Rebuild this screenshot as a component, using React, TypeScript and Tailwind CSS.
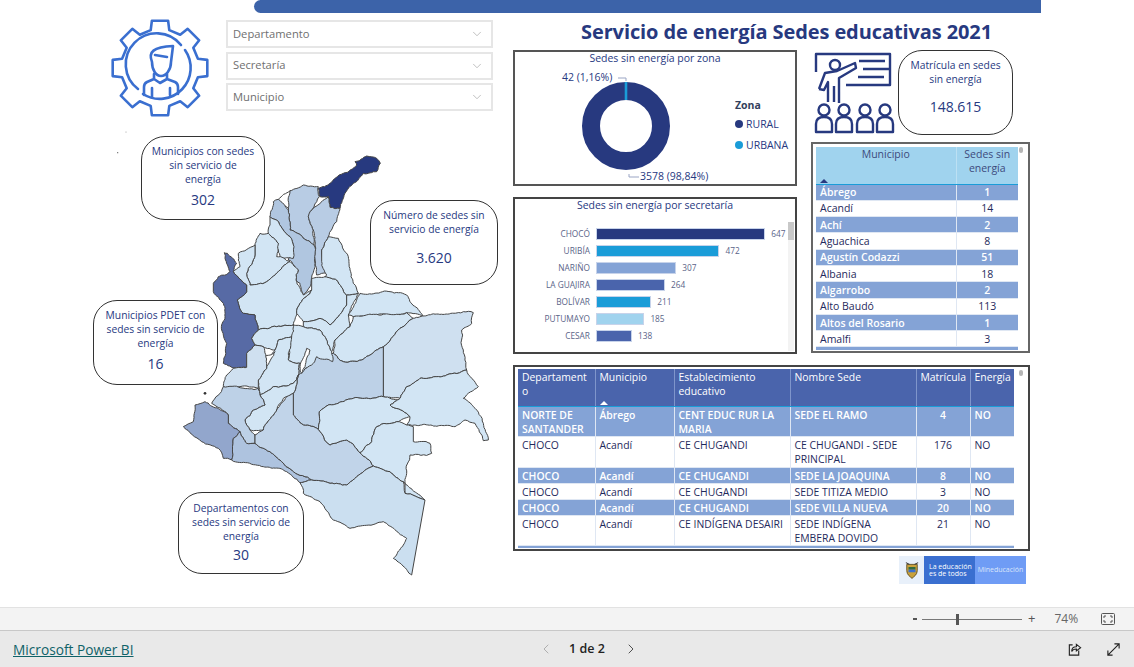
import { ChevronDown, ChevronLeft, ChevronRight } from "lucide-react";

const navy = "#27397f";
const cyan = "#1a9cd8";
const periwinkle = "#84a3d6";
const indigo = "#4a64ac";
const sky = "#a0d3ee";

const secretarias = [
  { name: "CHOCÓ", value: 647, color: navy },
  { name: "URIBÍA", value: 472, color: cyan },
  { name: "NARIÑO", value: 307, color: periwinkle },
  { name: "LA GUAJIRA", value: 264, color: indigo },
  { name: "BOLÍVAR", value: 211, color: cyan },
  { name: "PUTUMAYO", value: 185, color: sky },
  { name: "CESAR", value: 138, color: indigo },
];

const municipios: [string, number][] = [
  ["Ábrego", 1],
  ["Acandí", 14],
  ["Achí", 2],
  ["Aguachica", 8],
  ["Agustín Codazzi", 51],
  ["Albania", 18],
  ["Algarrobo", 2],
  ["Alto Baudó", 113],
  ["Altos del Rosario", 1],
  ["Amalfi", 3],
];

const sedes = [
  ["NORTE DE SANTANDER", "Ábrego", "CENT EDUC RUR LA MARIA", "SEDE EL RAMO", "4"],
  ["CHOCO", "Acandí", "CE CHUGANDI", "CE CHUGANDI - SEDE PRINCIPAL", "176"],
  ["CHOCO", "Acandí", "CE CHUGANDI", "SEDE LA JOAQUINA", "8"],
  ["CHOCO", "Acandí", "CE CHUGANDI", "SEDE TITIZA MEDIO", "3"],
  ["CHOCO", "Acandí", "CE CHUGANDI", "SEDE VILLA NUEVA", "20"],
  ["CHOCO", "Acandí", "CE INDÍGENA DESAIRI", "SEDE INDÍGENA EMBERA DOVIDO", "21"],
];

// departamentos, traced by hand from the reference
const departamentos = [
  { fill: "#ffffff", d: "M565 208L600 182L605 240Z" },
  { fill: navy, d: "M685 175L720 160L760 130L800 105L795 95L830 78L860 85L871 100L860 125L820 130L790 160L765 190L750 235L720 232L715 200L690 200Z" },
  { fill: "#b8cce4", d: "M600 182L640 165L685 170L688 200L672 230L655 260L670 300L672 345L640 325L600 300L595 240Z" },
  { fill: "#b8cce4", d: "M672 232L715 200L720 232L750 235L740 275L715 320L695 360L700 395L710 430L680 435L675 345L670 300L655 260Z" },
  { fill: "#b0c6e0", d: "M550 215L565 208L595 240L600 300L640 325L672 345L675 400L660 470L640 495L630 460L618 450L625 420L605 395L595 390L610 360L600 320L560 270L540 260Z" },
  { fill: "#d2e5f4", d: "M540 260L560 270L600 320L612 350L610 385L570 385L560 350L565 340L535 310L540 285Z" },
  { fill: "#d2e5f4", d: "M495 345L510 310L535 310L565 340L560 380L600 395L570 420L530 455L480 465L470 430L495 375Z" },
  { fill: "#d2e5f4", d: "M445 370L495 345L495 375L470 430L480 465L530 455L570 420L600 395L625 420L618 450L640 495L665 480L630 520L620 550L610 585L560 590L505 600L495 555L460 550L442 510L470 485L470 465L430 425L450 410Z" },
  { fill: "#576aa5", d: "M403 368L412 370L440 400L430 425L470 465L470 485L442 510L460 550L495 555L505 600L485 625L495 645L470 670L470 712L440 715L400 700L410 640L395 600L405 560L400 520L370 485L370 460L385 440L420 425L405 385Z" },
  { fill: "#d2e5f4", d: "M665 445L705 440L740 450L770 495L770 525L745 560L720 585L690 565L640 575L620 550L630 520L665 480Z" },
  { fill: "#d2e5f4", d: "M710 435L695 395L695 360L715 320L745 325L775 380L780 420L790 460L805 490L770 495L740 450L705 440Z" },
  { fill: "#d2e5f4", d: "M775 555L810 490L900 485L950 495L1000 560L950 548L850 555L790 560Z" },
  { fill: "#d2e5f4", d: "M770 495L805 490L775 555L780 590L735 630L725 665L690 600L640 590L640 575L690 565L720 585L745 560L770 525Z" },
  { fill: "#d2e5f4", d: "M790 560L950 548L970 565L925 600L880 650L815 690L760 695L730 670L735 630L780 590Z" },
  { fill: "#cfe0f0", d: "M970 565L1120 545L1150 548L1145 580L1115 600L1120 660L1130 720L1070 735L990 745L950 770L930 805L880 800L880 650L925 600Z" },
  { fill: "#bdd1e7", d: "M880 650L880 800L790 805L715 825L688 845L685 898L640 885L610 855L610 790L625 735L680 680L730 670L760 695L815 690Z" },
  { fill: "#d2e5f4", d: "M610 585L640 590L690 600L725 665L728 695L680 680L670 700L625 735L630 700L595 690L600 630Z" },
  { fill: "#ffffff", d: "M650 655L660 660L645 710L635 730L630 710Z" },
  { fill: "#d2e5f4", d: "M505 600L560 590L610 585L605 620L565 630L555 660L520 650L495 645L485 625Z" },
  { fill: "#d2e5f4", d: "M605 620L595 690L630 700L625 735L610 760L550 770L510 795L505 750L530 715L530 700L555 660L565 630Z" },
  { fill: "#ffffff", d: "M522 680L555 665L530 708Z" },
  { fill: "#cfe0f0", d: "M495 645L520 650L530 700L530 715L505 750L505 775L450 770L400 770L410 735L430 715L470 712L470 670Z" },
  { fill: "#d2e5f4", d: "M610 760L625 735L610 790L580 805L560 840L520 900L480 900L465 870L490 840L525 825L510 795L550 770Z" },
  { fill: "#bdd1e7", d: "M400 770L505 775L510 795L525 825L490 840L465 870L480 900L495 915L495 940L470 940L450 905L415 880L415 855L365 820Z" },
  { fill: "#92a6cc", d: "M315 825L345 815L415 855L415 880L450 905L430 925L425 990L400 985L385 955L335 935L280 890L310 875Z" },
  { fill: "#aec3df", d: "M450 905L470 940L495 940L540 965L570 990L610 1025L665 1050L630 1058L590 1025L520 1010L425 990L430 925Z" },
  { fill: "#c1d4e9", d: "M495 915L520 900L560 840L590 800L610 790L610 855L640 885L685 898L720 945L770 930L810 968L850 1008L800 1040L770 1065L720 1060L665 1050L610 1025L570 990L540 965L495 940Z" },
  { fill: "#d2e5f4", d: "M688 845L715 825L790 805L880 800L930 810L900 825L950 850L960 860L920 875L860 890L845 935L810 968L770 930L720 945L685 898Z" },
  { fill: "#d2e5f4", d: "M900 825L930 805L950 770L990 745L1070 735L1130 720L1165 770L1120 805L1150 830L1180 880L1195 930L1180 932L1155 880L1125 870L1095 890L950 885L960 860L950 850Z" },
  { fill: "#d2e5f4", d: "M860 890L920 875L950 885L970 890L970 935L1020 940L1025 970L960 975L950 1030L945 1055L945 1090L1005 1110L940 1055L900 1025L850 1008L810 968L845 935Z" },
  { fill: "#cbdff0", d: "M630 1058L665 1050L720 1060L770 1065L800 1040L850 1008L900 1025L940 1055L945 1090L1005 1110L965 1335L910 1285L950 1225L880 1175L780 1195L730 1170L690 1115L640 1090Z" },
];

type Pt = [number, number];

function noise(x: number, y: number) {
  const s = Math.sin(x * 12.9898 + y * 78.233) * 43758.5453;
  return s - Math.floor(s);
}

// midpoint displacement, same result for an edge in either direction so neighbours share it
function roughEdge(a: Pt, b: Pt): Pt[] {
  const len = Math.hypot(b[0] - a[0], b[1] - a[1]);
  if (len < 9) return [];
  const [p, q] = a[0] < b[0] || (a[0] === b[0] && a[1] < b[1]) ? [a, b] : [b, a];
  const off = (noise(p[0] + q[0], p[1] + q[1]) - 0.5) * Math.min(len * 0.22, 7);
  const mid: Pt = [
    (a[0] + b[0]) / 2 + ((q[1] - p[1]) / len) * off,
    (a[1] + b[1]) / 2 - ((q[0] - p[0]) / len) * off,
  ];
  return [...roughEdge(a, mid), mid, ...roughEdge(mid, b)];
}

function roughen(d: string) {
  const pts = [...d.matchAll(/(\d+) (\d+)/g)].map((m) => [Number(m[1]), Number(m[2])] as Pt);
  const out: Pt[] = [];
  pts.forEach((a, i) => {
    const b = pts[(i + 1) % pts.length];
    out.push(a);
    const straight = a[0] === b[0] || Math.hypot(b[0] - a[0], b[1] - a[1]) > 200;
    if (!straight) out.push(...roughEdge(a, b));
  });
  return "M" + out.map((p) => `${p[0].toFixed(1)} ${p[1].toFixed(1)}`).join("L") + "Z";
}

function gearPath() {
  const cx = 55;
  const cy = 54;
  const pts: string[] = [];
  for (let i = 0; i < 8; i++) {
    const a = (i * Math.PI) / 4 - Math.PI / 2;
    const at = (r: number, off: number) =>
      `${(cx + r * Math.cos(a + off)).toFixed(1)} ${(cy + r * Math.sin(a + off)).toFixed(1)}`;
    pts.push(at(39, -0.24), at(48, -0.17), at(48, 0.17), at(39, 0.24));
  }
  return "M" + pts.join("L") + "Z";
}

function GearIcon() {
  return (
    <svg viewBox="0 0 110 108" className="w-[110px] h-[108px]" fill="none" stroke="#3a6fd0" strokeWidth="2.6" strokeLinecap="round" strokeLinejoin="round">
      <path d={gearPath()} />
      <path d="M33 75A31 31 0 1 1 76 31" />
      <path d="M80 36A31 31 0 0 1 38 80" />
      <path d="M47 48C43 38 48 33 68 32L66 48C66 56 61 62 56 62C51 62 47 56 47 48Z" />
      <path d="M50 41L62 43" />
      <path d="M49 60L49 65L42 68C40 69 39 71 39 73L39 81M62 60L62 65L70 68C72 69 73 71 73 73L73 80M49 65L55 69L62 65M47 74L47 83M65 74L65 81" />
    </svg>
  );
}

function TeacherIcon() {
  return (
    <svg viewBox="0 0 95 90" className="w-[95px] h-[90px]" fill="none" stroke={navy} strokeWidth="2.4" strokeLinejoin="round">
      <path d="M10 24L10 6L84 6L84 37L40 37" />
      <path d="M53 13L79 13M57 21L83 21M52 29L78 29" />
      <circle cx="29" cy="17" r="5" />
      <path d="M13 41L19 25L31 23L49 15L50 20L33 30L33 55M13 41L18 42L22 34L22 54M28 38L28 54" />
      {[18, 38, 59, 79].map((x) => (
        <g key={x}>
          <circle cx={x} cy="62" r="5.5" />
          <path d={`M${x - 8} 84L${x - 8} 76C${x - 8} 71 ${x - 5} 69 ${x} 69C${x + 5} 69 ${x + 8} 71 ${x + 8} 76L${x + 8} 84Z`} />
        </g>
      ))}
    </svg>
  );
}

function Slicer({ label }: { label: string }) {
  return (
    <div className="flex h-[28px] items-center justify-between border-2 border-[#e6e6e6] pl-[5px] pr-[7px] text-[11.2px] text-[#6f6f6f]">
      {label}
      <ChevronDown className="w-[14px] h-[14px] text-[#a6a6a6]" strokeWidth={1.2} />
    </div>
  );
}

function Card({ title, value, className }: { title: string; value: string; className: string }) {
  return (
    <div className={`flex flex-col items-center rounded-[24px] border border-[#333] bg-white text-center text-[10.3px] leading-[14px] text-[#27397f] ${className}`}>
      <p>{title}</p>
      <p className="mt-auto text-[14px] leading-[18px]">{value}</p>
    </div>
  );
}

function ColombiaMap() {
  return (
    <svg viewBox="0 0 1260 1350" className="w-[420px] h-[450px]">
      <g stroke="#454545" strokeWidth="3" strokeLinejoin="round">
        {departamentos.map((p, i) => (
          <path key={i} d={roughen(p.d)} fill={p.fill} />
        ))}
      </g>
      <circle cx="345" cy="790" r="4" fill="#333" />
      <circle cx="83" cy="68" r="2" fill="#666" />
      <circle cx="108" cy="6" r="1.5" fill="#888" />
    </svg>
  );
}

function Donut() {
  return (
    <div className="relative h-[136px] border-2 border-[#555] bg-white">
      <p className="-mt-px text-center text-[10.5px] leading-[14px] text-[#27397f]">Sedes sin energía por zona</p>
      <svg viewBox="0 0 284 132" className="absolute left-0 top-0 w-[284px] h-[132px]" fill="none">
        <circle cx="111" cy="74" r="35" stroke={navy} strokeWidth="18" />
        <path d="M111 30L111 48" stroke={cyan} strokeWidth="2.6" />
        <path d="M103 26L111 26L111 29M114 122L114 125L124 125" stroke="#9aa5c4" strokeWidth="1" />
      </svg>
      <span className="absolute left-[47px] top-[18px] text-[10.5px] leading-[14px] text-[#27397f]">42 (1,16%)</span>
      <span className="absolute left-[125px] top-[117px] text-[10.5px] leading-[14px] text-[#27397f]">3578 (98,84%)</span>
      <div className="absolute left-[220px] top-[46px] text-[10.5px] leading-[14px] text-[#27397f]">
        <p className="font-bold text-[#333f5c]">Zona</p>
        <p className="mt-[5px] flex items-center gap-[3px]">
          <span className="w-[8px] h-[8px] rounded-full bg-[#27397f]" />
          RURAL
        </p>
        <p className="mt-[7px] flex items-center gap-[3px]">
          <span className="w-[8px] h-[8px] rounded-full bg-[#1a9cd8]" />
          URBANA
        </p>
      </div>
    </div>
  );
}

function BarChart() {
  return (
    <div className="mt-[11px] h-[157px] border-2 border-[#444] bg-white">
      <p className="-mt-px text-center text-[10.5px] leading-[14px] text-[#27397f]">Sedes sin energía por secretaría</p>
      <div className="flex mt-[10px] h-[129px]">
        <div className="w-[272px] pt-[6px] flex flex-col gap-[5px]">
          {secretarias.map((s) => (
            <div key={s.name} className="flex h-[12px] items-center">
              <span className="w-[75px] text-right text-[8.3px] text-[#5a6488]">{s.name}</span>
              <span
                className="ml-[6px] h-[12px] border border-[#c7d3ea]"
                style={{ width: s.value * 0.2615, backgroundColor: s.color }}
              />
              <span className="ml-[6px] text-[8.3px] text-[#5a6488]">{s.value}</span>
            </div>
          ))}
        </div>
        <div className="ml-[1px] w-[6px] h-[129px] bg-[#f3f3f3]">
          <div className="h-[18px] bg-[#c8c8c8]" />
        </div>
      </div>
    </div>
  );
}

function MunicipiosTable() {
  return (
    <div className="relative mt-[7px] h-[211px] overflow-hidden border-2 border-[#666] bg-white px-[3px] pt-[3px]">
      <table className="w-[202px] table-fixed border-collapse text-[10.5px] leading-[14px] text-[#27397f]">
        <thead>
          <tr className="h-[37px] bg-[#a0d3ee] align-top text-[#3d4a7c]">
            <th className="relative w-[140px] border-b border-[#1a9cd8] border-r border-r-white/30 font-normal">
              Municipio
              <span className="absolute left-[4px] bottom-[1px] w-0 h-0 border-x-[4px] border-x-transparent border-b-[4px] border-b-[#27397f]" />
            </th>
            <th className="border-b border-[#1a9cd8] font-normal">Sedes sin energía</th>
          </tr>
        </thead>
        <tbody>
          {municipios.map(([name, n], i) => (
            <tr key={name} className={`h-[16.3px] ${i % 2 === 0 ? "bg-[#84a3d6] font-semibold text-white" : "text-[#1f2a5c]"}`}>
              <td className="border-b border-r border-[#dfe7f3] pl-[4px] py-0">{name}</td>
              <td className="border-b border-[#dfe7f3] text-center py-0">{n}</td>
            </tr>
          ))}
          <tr className="h-[3px] bg-[#84a3d6]">
            <td />
            <td />
          </tr>
        </tbody>
      </table>
      <span className="absolute right-[5px] top-[3px] w-[4px] h-[6px] rounded-full bg-[#b5b5b5]" />
    </div>
  );
}

function SedesTable() {
  return (
    <div className="relative mt-[11px] h-[186px] w-[517px] overflow-hidden border-2 border-[#444] bg-white pl-[3px] pt-[2px]">
      <table className="w-[496px] table-fixed border-collapse text-[10.4px] leading-[14px] text-[#27397f]">
        <thead>
          <tr className="h-[37px] bg-[#4a64ac] align-top text-left text-white">
            <th className="w-[77px] border-r border-[#7f95cb] border-b border-b-[#1a9cd8] pl-[4px] pr-[4px] pt-[1px] font-normal break-all">Departamento</th>
            <th className="relative w-[79px] border-r border-[#7f95cb] border-b border-b-[#1a9cd8] pl-[4px] pt-[1px] font-normal">
              Municipio
              <span className="absolute left-[4px] bottom-[1px] w-0 h-0 border-x-[4px] border-x-transparent border-b-[4px] border-b-white" />
            </th>
            <th className="w-[116px] border-r border-[#7f95cb] border-b border-b-[#1a9cd8] pl-[4px] pt-[1px] font-normal">Establecimiento educativo</th>
            <th className="w-[126px] border-r border-[#7f95cb] border-b border-b-[#1a9cd8] pl-[4px] pt-[1px] font-normal">Nombre Sede</th>
            <th className="w-[54px] border-r border-[#7f95cb] border-b border-b-[#1a9cd8] pl-[4px] pt-[1px] font-normal">Matrícula</th>
            <th className="border-b border-b-[#1a9cd8] pl-[4px] pt-[1px] font-normal">Energía</th>
          </tr>
        </thead>
        <tbody>
          {sedes.map((row, i) => (
            <tr key={row[3]} className={`align-top ${i === 1 ? "h-[31px]" : ""} ${i % 2 === 0 ? "bg-[#84a3d6] font-semibold text-white" : "text-[#1f2a5c]"}`}>
              <td className="border-b border-r border-[#dfe7f3] pl-[4px] pt-px">{row[0]}</td>
              <td className="border-b border-r border-[#dfe7f3] pl-[4px] pt-px">{row[1]}</td>
              <td className="border-b border-r border-[#dfe7f3] pl-[4px] pt-px">{row[2]}</td>
              <td className="border-b border-r border-[#dfe7f3] pl-[4px] pr-[16px] pt-px">{row[3]}</td>
              <td className="border-b border-r border-[#dfe7f3] pt-px text-center">{row[4]}</td>
              <td className="border-b border-[#dfe7f3] pl-[4px] pt-px">NO</td>
            </tr>
          ))}
          <tr className="h-[3px] bg-[#84a3d6]">
            <td colSpan={6} />
          </tr>
        </tbody>
      </table>
      <span className="absolute right-[5px] top-[3px] w-[4px] h-[6px] rounded-full bg-[#b5b5b5]" />
    </div>
  );
}

function MenLogo() {
  return (
    <div className="mt-[5px] ml-[386px] flex h-[28px] w-[127px] text-[7px] leading-[7.5px] text-white">
      <div className="flex w-[25px] items-center justify-center bg-[#e8f0fa]">
        <svg viewBox="0 0 16 20" className="w-[14px] h-[19px]">
          <path d="M2 3L14 3L14 10C14 15 10 17 8 19C6 17 2 15 2 10Z" fill="#c9a13b" stroke="#5a4a20" strokeWidth="1" />
          <rect x="4" y="6" width="8" height="3" fill="#2f6a3f" />
          <rect x="4" y="9" width="8" height="3" fill="#3a6fd0" />
          <path d="M1 1L5 3M15 1L11 3" stroke="#333" strokeWidth="1.2" />
        </svg>
      </div>
      <div className="flex w-[51px] items-center bg-[#3a6fd0] pl-[5px]">
        <p>
          La educación
          <br />
          es de todos
        </p>
      </div>
      <div className="flex flex-1 items-center justify-center bg-[#6f9cf5] text-[#dbe6fb]">Mineducación</div>
    </div>
  );
}

function ZoomBar() {
  return (
    <div className="flex h-[24px] items-center border-y border-t-[#e2e2e2] border-b-[#c8c8c8] bg-[#f3f3f3] pl-[913px] text-[12px] text-[#666]">
      <span className="w-[4px] h-[2px] bg-[#555]" />
      <div className="relative ml-[5px] h-px w-[100px] bg-[#777]">
        <span className="absolute left-[34px] top-[-5px] h-[11px] w-[3px] bg-[#555]" />
      </div>
      <span className="ml-[6px] text-[13px] text-[#555]">+</span>
      <span className="ml-[19px]">74%</span>
      <svg viewBox="0 0 14 12" className="ml-[23px] w-[14px] h-[12px]" fill="none" stroke="#555">
        <rect x="0.5" y="0.5" width="13" height="11" rx="1" />
        <path d="M3 5L3 3L5 3M9 3L11 3L11 5M11 7L11 9L9 9M5 9L3 9L3 7" />
      </svg>
    </div>
  );
}

function Footer() {
  return (
    <footer className="flex flex-1 items-center bg-[#e9e9e9] pl-[13px] text-[13.7px]">
      <a className="mt-[2px] w-[525px] text-[#0f6268] underline">Microsoft Power BI</a>
      <ChevronLeft className="w-[16px] h-[16px] text-[#aaa]" strokeWidth={1.4} />
      <span className="ml-[15px] w-[38px] font-semibold text-[12.5px] text-[#222] whitespace-nowrap">1 de 2</span>
      <ChevronRight className="ml-[16px] w-[16px] h-[16px] text-[#444]" strokeWidth={1.4} />
      <svg viewBox="0 0 16 16" className="ml-[428px] w-[15px] h-[15px]" fill="none" stroke="#222" strokeWidth="1.2">
        <path d="M6 3L2.5 3L2.5 14L12.5 14L12.5 9" />
        <path d="M5 10C5 7 7 5 10 5L10 2.5L14.5 6L10 9.5L10 7.5C8 7.5 6 8 5 10Z" />
      </svg>
      <svg viewBox="0 0 16 16" className="ml-[24px] w-[15px] h-[15px]" fill="none" stroke="#222" strokeWidth="1.2">
        <path d="M2 14L14 2M9 2L14 2L14 7M2 9L2 14L7 14" />
      </svg>
    </footer>
  );
}

export default function App() {
  return (
    <div className="flex h-screen flex-col overflow-hidden bg-white font-['Open_Sans',sans-serif]">
      <main className="h-[607px] shrink-0">
        <div className="ml-[254px] h-[13px] w-[787px] rounded-l-lg bg-[#3c63a9]" />
        <div className="flex">
          <section className="ml-[90px] w-[420px]">
            <div className="flex h-[117px]">
              <div className="ml-[15px] mt-[1px]">
                <GearIcon />
              </div>
              <div className="ml-[11px] mt-[7px] flex w-[267px] flex-col gap-[3.5px]">
                <Slicer label="Departamento" />
                <Slicer label="Secretaría" />
                <Slicer label="Municipio" />
              </div>
            </div>
            <div className="relative h-[450px]">
              <ColombiaMap />
              <Card className="absolute left-[51px] top-[6px] h-[84px] w-[124px] px-[8px] pt-[7px] pb-[10px]" title="Municipios con sedes sin servicio de energía" value="302" />
              <Card className="absolute left-[280px] top-[70px] h-[85px] w-[128px] px-[8px] pt-[7px] pb-[17px]" title="Número de sedes sin servicio de energía" value="3.620" />
              <Card className="absolute left-[3px] top-[170px] h-[85px] w-[125px] px-[6px] pt-[7px] pb-[11px]" title="Municipios PDET con sedes sin servicio de energía" value="16" />
              <Card className="absolute left-[88px] top-[362px] h-[82px] w-[126px] px-[8px] pt-[8px] pb-[9px]" title="Departamentos con sedes sin servicio de energía" value="30" />
            </div>
          </section>
          <section className="ml-[3px] w-[517px]">
            <h1 className="mt-[6px] h-[31px] pl-[68px] text-[20px] font-bold leading-[26px] tracking-[-0.1px] text-[#27397f] whitespace-nowrap">
              Servicio de energía Sedes educativas 2021
            </h1>
            <div className="flex">
              <div className="w-[284px]">
                <Donut />
                <BarChart />
              </div>
              <div className="ml-[14px] w-[219px]">
                <div className="flex h-[85px]">
                  <div className="-ml-[5px] -mt-[2px]">
                    <TeacherIcon />
                  </div>
                  <Card className="ml-[-3px] h-[85px] w-[115px] px-[6px] pt-[7px] pb-[18px]" title="Matrícula en sedes sin energía" value="148.615" />
                </div>
                <MunicipiosTable />
              </div>
            </div>
            <SedesTable />
            <MenLogo />
          </section>
        </div>
      </main>
      <ZoomBar />
      <Footer />
    </div>
  );
}
